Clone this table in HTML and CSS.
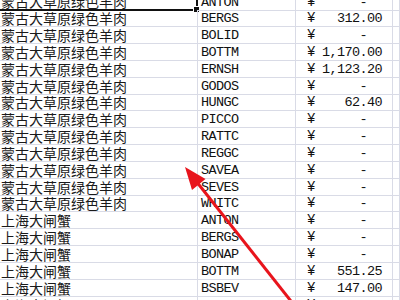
FILE: index.html
```html
<!DOCTYPE html>
<html lang="zh-CN">
<head>
<meta charset="utf-8">
<link rel="stylesheet" href="styles.css">
</head>
<body>
<div class="sheet">
  <div class="row"><div class="c name sel">蒙古大草原绿色羊肉<span class="handle"></span></div><div class="c code">ANTON</div><div class="c amt"><span class="yen">¥</span><span class="num">-&nbsp;&nbsp;</span></div><div class="c"></div></div>
  <div class="row"><div class="c name">蒙古大草原绿色羊肉</div><div class="c code">BERGS</div><div class="c amt"><span class="yen">¥</span><span class="num">312.00</span></div><div class="c"></div></div>
  <div class="row"><div class="c name">蒙古大草原绿色羊肉</div><div class="c code">BOLID</div><div class="c amt"><span class="yen">¥</span><span class="num">-&nbsp;&nbsp;</span></div><div class="c"></div></div>
  <div class="row"><div class="c name">蒙古大草原绿色羊肉</div><div class="c code">BOTTM</div><div class="c amt"><span class="yen">¥</span><span class="num">1,170.00</span></div><div class="c"></div></div>
  <div class="row"><div class="c name">蒙古大草原绿色羊肉</div><div class="c code">ERNSH</div><div class="c amt"><span class="yen">¥</span><span class="num">1,123.20</span></div><div class="c"></div></div>
  <div class="row"><div class="c name">蒙古大草原绿色羊肉</div><div class="c code">GODOS</div><div class="c amt"><span class="yen">¥</span><span class="num">-&nbsp;&nbsp;</span></div><div class="c"></div></div>
  <div class="row"><div class="c name">蒙古大草原绿色羊肉</div><div class="c code">HUNGC</div><div class="c amt"><span class="yen">¥</span><span class="num">62.40</span></div><div class="c"></div></div>
  <div class="row"><div class="c name">蒙古大草原绿色羊肉</div><div class="c code">PICCO</div><div class="c amt"><span class="yen">¥</span><span class="num">-&nbsp;&nbsp;</span></div><div class="c"></div></div>
  <div class="row"><div class="c name">蒙古大草原绿色羊肉</div><div class="c code">RATTC</div><div class="c amt"><span class="yen">¥</span><span class="num">-&nbsp;&nbsp;</span></div><div class="c"></div></div>
  <div class="row"><div class="c name">蒙古大草原绿色羊肉</div><div class="c code">REGGC</div><div class="c amt"><span class="yen">¥</span><span class="num">-&nbsp;&nbsp;</span></div><div class="c"></div></div>
  <div class="row"><div class="c name">蒙古大草原绿色羊肉</div><div class="c code">SAVEA</div><div class="c amt"><span class="yen">¥</span><span class="num">-&nbsp;&nbsp;</span></div><div class="c"></div></div>
  <div class="row"><div class="c name">蒙古大草原绿色羊肉</div><div class="c code">SEVES</div><div class="c amt"><span class="yen">¥</span><span class="num">-&nbsp;&nbsp;</span></div><div class="c"></div></div>
  <div class="row"><div class="c name">蒙古大草原绿色羊肉</div><div class="c code">WHITC</div><div class="c amt"><span class="yen">¥</span><span class="num">-&nbsp;&nbsp;</span></div><div class="c"></div></div>
  <div class="row"><div class="c name">上海大闸蟹</div><div class="c code">ANTON</div><div class="c amt"><span class="yen">¥</span><span class="num">-&nbsp;&nbsp;</span></div><div class="c"></div></div>
  <div class="row"><div class="c name">上海大闸蟹</div><div class="c code">BERGS</div><div class="c amt"><span class="yen">¥</span><span class="num">-&nbsp;&nbsp;</span></div><div class="c"></div></div>
  <div class="row"><div class="c name">上海大闸蟹</div><div class="c code">BONAP</div><div class="c amt"><span class="yen">¥</span><span class="num">-&nbsp;&nbsp;</span></div><div class="c"></div></div>
  <div class="row"><div class="c name">上海大闸蟹</div><div class="c code">BOTTM</div><div class="c amt"><span class="yen">¥</span><span class="num">551.25</span></div><div class="c"></div></div>
  <div class="row"><div class="c name">上海大闸蟹</div><div class="c code">BSBEV</div><div class="c amt"><span class="yen">¥</span><span class="num">147.00</span></div><div class="c"></div></div>
  <div class="row"><div class="c name">上海大闸蟹</div><div class="c code">CACTU</div><div class="c amt"><span class="yen">¥</span><span class="num">-&nbsp;&nbsp;</span></div><div class="c"></div></div>
</div>
<svg class="arrow" width="400" height="300" viewBox="0 0 400 300" aria-hidden="true">
  <line x1="196" y1="181" x2="298" y2="310" stroke="#e8141c" stroke-width="3"/>
  <polygon points="185,167 205.5,179 192,190" fill="#e8141c"/>
</svg>
</body>
</html>
```

FILE: styles.css
```css
html, body {
  margin: 0;
  padding: 0;
  background: #ffffff;
  overflow: hidden;
  width: 400px;
  height: 300px;
}

body {
  position: relative;
  font-family: "Liberation Mono", "Noto Sans CJK SC", monospace;
  color: #111111;
}

.sheet {
  margin-top: -6.5px;
  display: flex;
  flex-direction: column;
}

.row {
  display: grid;
  grid-template-columns: 198px 98px 97px 1fr;
  height: 16.85px;
}

.c {
  position: relative;
  border-bottom: 1px solid #d9dbe6;
  border-right: 1px solid #d9dbe6;
  display: flex;
  align-items: flex-end;
  white-space: nowrap;
  line-height: 15px;
  padding-bottom: 0;
  box-sizing: border-box;
}

.name {
  font-family: "Noto Sans CJK SC", sans-serif;
  font-size: 14px;
  padding-left: 1px;
  color: #1a1a1a;
}

.sel {
  border-bottom: 2px solid #111111;
  border-right: 2px solid #111111;
}

.handle {
  position: absolute;
  right: -4px;
  bottom: -4px;
  width: 5px;
  height: 5px;
  background: #111111;
  border: 1px solid #ffffff;
}

.code {
  font-size: 13.5px;
  letter-spacing: -0.6px;
  padding-left: 3px;
}

.amt {
  font-size: 13.5px;
  letter-spacing: -0.6px;
  justify-content: space-between;
  padding-left: 11px;
  padding-right: 10px;
}

.yen {
  font-size: 14px;
}

.arrow {
  position: absolute;
  left: 0;
  top: 0;
}
```
